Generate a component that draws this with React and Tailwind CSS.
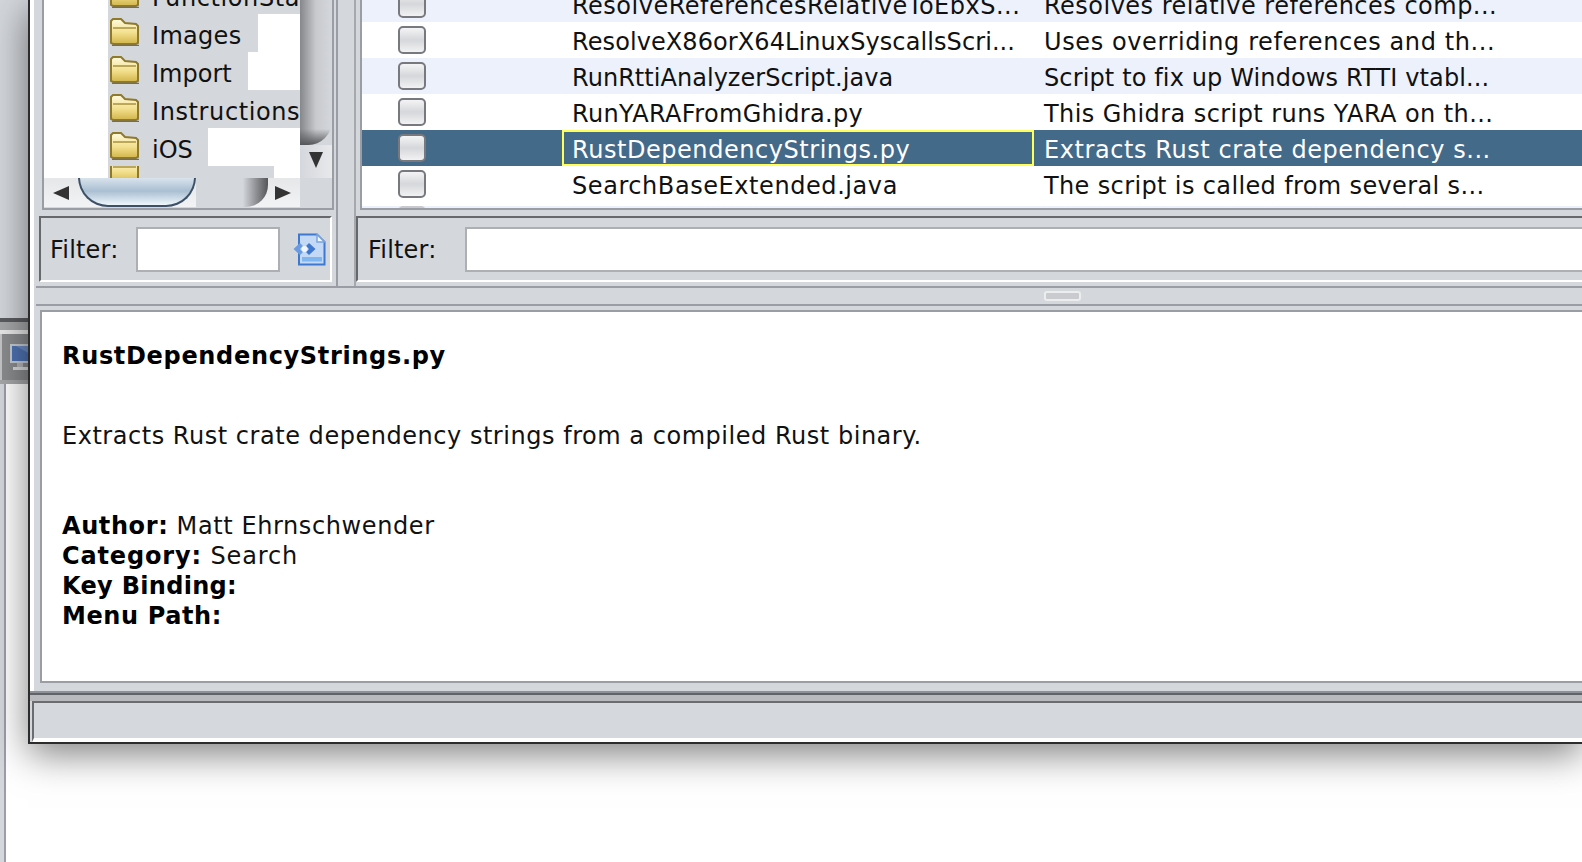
const ROWS = [
  { name: 'ResolveReferencesRelativeToEbxS...', desc: 'Resolves relative references comp...', nameTrack: 'tracking-[0.5px]', descTrack: 'tracking-[0.49px]' },
  { name: 'ResolveX86orX64LinuxSyscallsScri...', desc: 'Uses overriding references and th...', nameTrack: 'tracking-[0.09px]', descTrack: 'tracking-[0.6px]' },
  { name: 'RunRttiAnalyzerScript.java', desc: 'Script to fix up Windows RTTI vtabl...', nameTrack: 'tracking-[0.04px]', descTrack: 'tracking-[0.13px]' },
  { name: 'RunYARAFromGhidra.py', desc: 'This Ghidra script runs YARA on th...', nameTrack: 'tracking-[0.35px]', descTrack: 'tracking-[0.43px]' },
  { name: 'RustDependencyStrings.py', desc: 'Extracts Rust crate dependency s...', nameTrack: 'tracking-[0.55px]', descTrack: 'tracking-[0.57px]', selected: true },
  { name: 'SearchBaseExtended.java', desc: 'The script is called from several s...', nameTrack: 'tracking-[0.57px]', descTrack: 'tracking-[0.37px]' },
];

const TREE = [
  { name: 'FunctionSta', h: 'h-[38px]', gap: 0, track: 'tracking-[0.6px]' },
  { name: 'Images', h: 'h-[38px]', gap: 42, track: 'tracking-[0.3px]' },
  { name: 'Import', h: 'h-[38px]', gap: 52, track: 'tracking-normal' },
  { name: 'Instructions', h: 'h-[38px]', gap: 0, track: 'tracking-[0.6px]' },
  { name: 'iOS', h: 'h-[38px]', gap: 92, track: 'tracking-normal' },
  { name: '', h: 'h-[12px]', gap: 26, track: 'tracking-normal' },
];

function Folder() {
  return (
    <svg width="31" height="28" viewBox="0 0 31 28" className="shrink-0 -mt-[3px]">
      <defs>
        <linearGradient id="fold" x1="0" y1="0" x2="0" y2="1">
          <stop offset="0" stopColor="#fffbe0" />
          <stop offset="0.55" stopColor="#f3e08e" />
          <stop offset="1" stopColor="#d2b549" />
        </linearGradient>
      </defs>
      <path d="M2 25 L2 3 L4 1 L12 1 L16 5 L27 6 L29 8 L29 25 L27 26 L4 26 Z" fill="url(#fold)" stroke="#8f7a2c" strokeWidth="2" />
      <path d="M4 10 L27 10" stroke="#a8923f" strokeWidth="1.5" />
      <path d="M3 27.5 L30 27.5" stroke="#6d6d70" strokeWidth="1.5" />
    </svg>
  );
}

function Checkbox() {
  return (
    <div className="w-[28px] h-[28px] rounded-[5px] border-2 border-[#77797e] bg-gradient-to-b from-[#f4f4f5] via-[#d6d7da] to-[#f2f2f3]" />
  );
}

function ScriptIcon() {
  return (
    <svg width="33" height="33" viewBox="0 0 33 33" className="shrink-0">
      <path d="M6 1.5 L24 1.5 L31.5 9 L31.5 31.5 L6 31.5 Z" fill="#c3d9f5" stroke="#3f78d0" strokeWidth="2" />
      <path d="M24 1.5 L24 9 L31.5 9 Z" fill="#f2f7fd" stroke="#7ba4e0" strokeWidth="1.5" />
      <path d="M9 24 L29 24 L29 28.5 L9 28.5 Z" fill="#7fb6f0" />
      <path d="M7 10 L0.5 16 L7 22 L10 19 L7 16 L10 13 Z" fill="#6a9be0" />
      <path d="M16 10 L22.5 16 L16 22 L13 19 L16 16 L13 13 Z" fill="#3f78d0" />
      <circle cx="11.5" cy="16" r="3" fill="#f0f6fd" />
    </svg>
  );
}

function Monitor() {
  return (
    <svg width="20" height="30" viewBox="0 0 20 30" className="shrink-0">
      <rect x="0" y="0" width="20" height="19" fill="#c9ccd2" />
      <rect x="2" y="2" width="18" height="15" fill="#4f74b4" />
      <path d="M6 2 L20 2 L20 10 Z" fill="#6f8fc6" />
      <rect x="7" y="19" width="6" height="4" fill="#b5b7bb" />
      <rect x="3" y="23" width="15" height="3" fill="#d9dadc" />
    </svg>
  );
}

function Filter() {
  return <span className="text-[#111] text-[24px] leading-none pt-[2px] tracking-[0.2px]">Filter:</span>;
}

export default function App() {
  return (
    <div className="w-[1582px] h-[862px] overflow-hidden flex bg-white font-['DejaVu_Sans',sans-serif]">
      {/* desktop strip left of the window */}
      <div className="w-[28px] shrink-0 flex flex-col">
        <div className="h-[318px] bg-[#d4d7dc]" />
        <div className="h-[4px] bg-[#5a5c60]" />
        <div className="h-[8px] bg-[#a6a7a9]" />
        <div className="h-[4px] bg-[#e9e9ea]" />
        <div className="h-[46px] bg-[#8b8c8e] border-l-2 border-[#c3c5c8] pl-[8px] pt-[10px] flex">
          <Monitor />
        </div>
        <div className="h-[4px] bg-[#a6a7a9]" />
        <div className="flex-1 flex bg-white">
          <div className="w-[4px] bg-[#d4d7dc]" />
          <div className="w-[2px] bg-[#9c9da8]" />
        </div>
      </div>

      {/* script manager window */}
      <div className="w-[1554px] shrink-0 h-[744px] relative border-l-2 border-b-2 border-[#2c2c2c] bg-[#d4d7dc] shadow-[0_10px_36px_rgba(0,0,0,0.5)] flex">
        <div className="w-[4px] h-[692px] bg-white shrink-0" />
        <div className="flex-1 min-w-0 flex flex-col">
          {/* top split */}
          <div className="h-[286px] flex">
            {/* category pane */}
            <div className="w-[304px] shrink-0 border-r-2 border-[#9a9da3] flex flex-col pr-[4px]">
              <div className="h-[210px] ml-[8px] mr-[-2px] flex flex-col border-x-2 border-b-2 border-[#9a9da3]">
                <div className="h-[178px] flex">
                  <div className="w-[64px] bg-white shrink-0" />
                  <div className="w-[192px] shrink-0 overflow-hidden">
                    <div className="-mt-[24px] flex flex-col">
                      {TREE.map(({ name, h, gap, track }, i) => (
                        <div key={i} className={`${h} flex overflow-hidden`}>
                          <div className={`flex-1 min-w-0 bg-[#d4d7dc] flex items-center gap-[12px] pl-[1px] whitespace-nowrap overflow-hidden text-[#111] text-[24px] ${track}`}>
                            <Folder />
                            <span className="pt-[5px]">{name}</span>
                          </div>
                          {gap > 0 && <div className="bg-white shrink-0" style={{ width: gap }} />}
                        </div>
                      ))}
                    </div>
                  </div>
                  <div className="flex-1 flex flex-col">
                    <div className="h-[145px] flex flex-col justify-end overflow-hidden bg-gradient-to-r from-[#85878b] via-[#c8cacd] to-[#d4d7dc] rounded-br-[24px]">
                      <div className="h-[16px] bg-gradient-to-b from-transparent to-[#55565a]" />
                    </div>
                    <div className="flex-1 flex items-center justify-center pb-[4px] bg-gradient-to-r from-[#d4d7dc] to-[#e8e9eb]">
                      <svg width="14" height="16" viewBox="0 0 14 16"><path d="M0 0 L14 0 L7 16 Z" fill="#333" /></svg>
                    </div>
                  </div>
                </div>
                <div className="h-[30px] flex">
                  <div className="w-[256px] h-[29px] flex items-center bg-gradient-to-b from-[#e6e7e9] to-[#f2f3f4] overflow-hidden">
                    <svg width="16" height="14" viewBox="0 0 16 14" className="ml-[9px]"><path d="M16 0 L16 14 L0 7 Z" fill="#333" /></svg>
                    <div className="ml-[9px] w-[118px] h-[30px] -mt-[2px] rounded-b-[38px] border-x-2 border-b-2 border-[#3c5068] bg-gradient-to-b from-[#dde6ee] via-[#a9bfd2] to-[#eff6fb] shrink-0" />
                    <div className="w-[72px] h-full rounded-br-[22px] bg-gradient-to-r from-[#d4d7dc] from-65% to-[#55565a] shrink-0" />
                    <svg width="16" height="14" viewBox="0 0 16 14" className="ml-[7px]"><path d="M0 0 L16 7 L0 14 Z" fill="#333" /></svg>
                  </div>
                </div>
              </div>
              <div className="mt-[6px] ml-[5px] h-[66px] border-l-2 border-t-2 border-[#66686c] border-r-2 border-r-white border-b-2 border-b-white flex items-center pl-[9px]">
                <Filter />
                <div className="ml-[17px] w-[144px] h-[45px] bg-white border-2 border-[#adafb3]" />
                <div className="ml-[13px]"><ScriptIcon /></div>
              </div>
            </div>
            <div className="w-[16px] shrink-0" />
            {/* script table pane */}
            <div className="flex-1 min-w-0 flex flex-col border-l-2 border-[#a6a8ac]">
              <div className="h-[210px] ml-[4px] flex flex-col border-l-2 border-b-2 border-[#9a9da3] overflow-hidden bg-white">
                <div className="-mt-[14px]">
                  {ROWS.map(({ name, desc, nameTrack, descTrack, selected }, i) => (
                    <div
                      key={name}
                      className={`h-[36px] flex text-[24px] ${selected ? 'bg-[#446a8a] text-white' : i % 2 === 0 ? 'bg-[#edf1fb] text-[#111]' : 'bg-white text-[#111]'}`}
                    >
                      <div className="w-[200px] shrink-0 flex items-center pl-[36px]">
                        <Checkbox />
                      </div>
                      <div className={`w-[472px] shrink-0 flex items-center pt-[3px] whitespace-nowrap overflow-hidden ${nameTrack} ${selected ? 'border-2 border-[#ffff55] pl-[8px]' : 'pl-[10px]'}`}>
                        {name}
                      </div>
                      <div className={`flex-1 flex items-center pt-[3px] pl-[10px] whitespace-nowrap overflow-hidden ${descTrack}`}>{desc}</div>
                    </div>
                  ))}
                  <div className="h-[8px] bg-[#edf1fb] pl-[36px]">
                    <div className="w-[28px] h-[8px] mt-[4px] bg-[#c8c9cc] rounded-t-[5px]" />
                  </div>
                </div>
              </div>
              <div className="mt-[6px] h-[66px] border-l-2 border-t-2 border-[#66686c] border-b-2 border-b-white flex items-center pl-[10px]">
                <Filter />
                <div className="ml-[28px] flex-1 h-[45px] bg-white border-y-2 border-l-2 border-[#adafb3]" />
              </div>
            </div>
          </div>
          <div className="h-[2px] ml-[2px] bg-[#9a9da3]" />

          {/* divider with grip */}
          <div className="h-[16px] flex items-center">
            <div className="ml-[1010px] w-[37px] h-[10px] rounded-[3px] border-2 border-[#eceded] bg-[#c9cbcf]" />
          </div>
          <div className="h-[2px] ml-[2px] bg-[#9a9da3]" />

          {/* description */}
          <div className="h-[379px] pt-[4px] pl-[6px] pb-[2px]">
            <div className="h-[373px] border-l-2 border-t-2 border-b-2 border-[#9a9da3] bg-white pl-[20px] pt-[29px] text-[#111] text-[24px]">
              <div className="font-bold text-black leading-[30px] tracking-[0.67px]">RustDependencyStrings.py</div>
              <div className="mt-[50px] leading-[30px] tracking-[0.53px]">Extracts Rust crate dependency strings from a compiled Rust binary.</div>
              <div className="mt-[60px] leading-[30px]">
                <div className="tracking-[0.6px]"><b className="text-black">Author:</b> Matt Ehrnschwender</div>
                <div className="tracking-[0.85px]"><b className="text-black">Category:</b> Search</div>
                <div className="tracking-[0.3px]"><b className="text-black">Key Binding:</b></div>
                <div className="tracking-[0.6px]"><b className="text-black">Menu Path:</b></div>
              </div>
            </div>
          </div>

          {/* status bar */}
          <div className="h-[6px]" />
          <div className="h-[4px] bg-[#8e9198] border-b-2 border-[#606368] -ml-[4px]" />
          <div className="h-[6px] bg-[#b8babd] -ml-[4px]" />
          <div className="flex-1 -ml-[2px] border-l-2 border-t-2 border-[#6a6c70] bg-[#d5d8dc] border-b-4 border-b-white" />
        </div>
      </div>
    </div>
  );
}
